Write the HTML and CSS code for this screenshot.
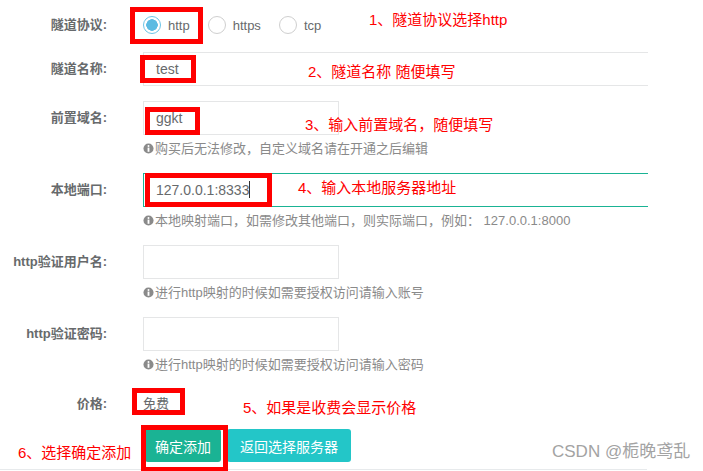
FILE: index.html
```html
<!DOCTYPE html>
<html lang="zh-CN">
<head>
    <meta charset="UTF-8">
    <meta name="viewport" content="width=device-width, initial-scale=1.0">
    <title>添加隧道</title>
    <link rel="stylesheet" href="styles.css">
</head>
<body>
    <div class="page">
        <form class="tunnel-form">
            <!-- 隧道协议 -->
            <div class="row row-radio">
                <label class="label">隧道协议:</label>
                <div class="field radios">
                    <span class="radio-item"><span class="radio checked"></span>http</span>
                    <span class="radio-item"><span class="radio"></span>https</span>
                    <span class="radio-item"><span class="radio"></span>tcp</span>
                </div>
            </div>
            <!-- 隧道名称 -->
            <div class="row">
                <label class="label">隧道名称:</label>
                <div class="field">
                    <div class="input wide">test</div>
                </div>
            </div>
            <!-- 前置域名 -->
            <div class="row">
                <label class="label">前置域名:</label>
                <div class="field">
                    <div class="input">ggkt</div>
                    <p class="help">
                        <svg class="info" viewBox="0 0 12 12"><circle cx="6" cy="6" r="5.5" fill="currentColor"/><circle cx="6" cy="3.3" r="1.1" fill="#fff"/><rect x="5" y="5" width="2" height="4.6" fill="#fff"/></svg>购买后无法修改，自定义域名请在开通之后编辑
                    </p>
                </div>
            </div>
            <!-- 本地端口 -->
            <div class="row">
                <label class="label">本地端口:</label>
                <div class="field">
                    <div class="input wide focus">127.0.0.1:8333<span class="caret"></span></div>
                    <p class="help">
                        <svg class="info" viewBox="0 0 12 12"><circle cx="6" cy="6" r="5.5" fill="currentColor"/><circle cx="6" cy="3.3" r="1.1" fill="#fff"/><rect x="5" y="5" width="2" height="4.6" fill="#fff"/></svg>本地映射端口，如需修改其他端口，则实际端口，例如： 127.0.0.1:8000
                    </p>
                </div>
            </div>
            <!-- http验证用户名 -->
            <div class="row">
                <label class="label">http验证用户名:</label>
                <div class="field">
                    <div class="input"></div>
                    <p class="help">
                        <svg class="info" viewBox="0 0 12 12"><circle cx="6" cy="6" r="5.5" fill="currentColor"/><circle cx="6" cy="3.3" r="1.1" fill="#fff"/><rect x="5" y="5" width="2" height="4.6" fill="#fff"/></svg>进行http映射的时候如需要授权访问请输入账号
                    </p>
                </div>
            </div>
            <!-- http验证密码 -->
            <div class="row">
                <label class="label">http验证密码:</label>
                <div class="field">
                    <div class="input"></div>
                    <p class="help">
                        <svg class="info" viewBox="0 0 12 12"><circle cx="6" cy="6" r="5.5" fill="currentColor"/><circle cx="6" cy="3.3" r="1.1" fill="#fff"/><rect x="5" y="5" width="2" height="4.6" fill="#fff"/></svg>进行http映射的时候如需要授权访问请输入密码
                    </p>
                </div>
            </div>
            <!-- 价格 -->
            <div class="row row-price">
                <label class="label">价格:</label>
                <div class="field price">免费</div>
            </div>
            <!-- 按钮 -->
            <div class="row row-btns">
                <div class="field buttons">
                    <button type="button" class="btn btn-primary">确定添加</button>
                    <button type="button" class="btn btn-info">返回选择服务器</button>
                </div>
            </div>
        </form>
        <div class="bottom-line"></div>

        <!-- 标注 -->
        <div class="mark" style="left:130px;top:7px;width:73px;height:37px"></div>
        <div class="mark" style="left:140px;top:55px;width:56px;height:28px"></div>
        <div class="mark" style="left:145px;top:107px;width:55px;height:28px"></div>
        <div class="mark" style="left:145px;top:173px;width:127px;height:34px"></div>
        <div class="mark" style="left:132px;top:388px;width:53px;height:27px"></div>
        <div class="mark" style="left:141px;top:425px;width:87px;height:47px"></div>

        <span class="note" style="left:369px;top:10px">1、隧道协议选择http</span>
        <span class="note" style="left:308px;top:62px">2、隧道名称 随便填写</span>
        <span class="note" style="left:305px;top:115px">3、输入前置域名，随便填写</span>
        <span class="note" style="left:298px;top:178px">4、输入本地服务器地址</span>
        <span class="note" style="left:243px;top:398px">5、如果是收费会显示价格</span>
        <span class="note" style="left:18px;top:443px">6、选择确定添加</span>

        <span class="watermark">CSDN @栀晚鸢乱</span>
    </div>
</body>
</html>
```

FILE: styles.css
```css
/* Page */
body{
    margin: 0;
    background-color: #fff;
    font-family: "Liberation Sans", "Noto Sans CJK SC", sans-serif;
    color: #676a6c;
}
.page{
    position: relative;
    width: 703px;
    height: 471px;
    overflow: hidden;
    padding-top: 8px;
    box-sizing: border-box;
}

/* Form rows */
.row{
    display: flex;
    align-items: flex-start;
    margin-bottom: 15px;
}
.row-radio{
    height: 34px;
    margin-bottom: 10px;
}
.label{
    width: 107px;
    flex-shrink: 0;
    text-align: right;
    font-size: 13px;
    font-weight: bold;
    line-height: 34px;
    color: #676a6c;
}
.field{
    margin-left: 36px;
}

/* Radios */
.radios{
    display: flex;
    align-items: center;
    height: 34px;
    gap: 18px;
    font-size: 13px;
}
.radio-item{
    display: flex;
    align-items: center;
    gap: 7px;
    color: #676a6c;
}
.radio{
    width: 18px;
    height: 18px;
    box-sizing: border-box;
    border: 1px solid #cfcfcf;
    border-radius: 50%;
    background-color: #fff;
}
.radio.checked{
    border: 1.5px solid #6cc4e6;
    background: radial-gradient(circle, #5bbbe2 0 5.5px, #fff 6px);
}

/* Inputs */
.input{
    width: 196px;
    height: 34px;
    box-sizing: border-box;
    border: 1px solid #e5e6e7;
    padding: 0 12px;
    font-size: 14px;
    line-height: 32px;
    color: #676a6c;
}
.input.wide{
    width: 505px;
    border-right: none;
}
.input.focus{
    border-color: #1ab394;
}
.caret{
    display: inline-block;
    width: 1px;
    height: 17px;
    background-color: #333;
    vertical-align: middle;
    margin-top: -3px;
}
.help{
    margin: 4px 0 0;
    font-size: 13px;
    line-height: 19px;
    color: #8a8a8a;
    white-space: nowrap;
}
.info{
    width: 11px;
    height: 11px;
    vertical-align: -1px;
    margin-right: 1px;
}

/* Price */
.row-price{
    margin-bottom: 10px;
}
.row-price .label{
    line-height: 30px;
}
.price{
    font-size: 13px;
    line-height: 30px;
    color: #676a6c;
}

/* Buttons */
.row-btns{
    margin-bottom: 0;
}
.buttons{
    margin-left: 145px;
    display: flex;
    gap: 6px;
}
.btn{
    height: 33px;
    border: none;
    border-radius: 3px;
    color: #fff;
    font-family: inherit;
    font-size: 14px;
    padding: 0 10px;
    cursor: pointer;
}
.btn-primary{
    background-color: #1ab394;
}
.btn-info{
    background-color: #23c6c8;
    padding: 0 13px;
}
.bottom-line{
    width: 647px;
    margin-top: 7px;
    border-top: 1px solid #e7eaec;
}

/* Annotations */
.mark{
    position: absolute;
    box-sizing: border-box;
    border: 5px solid #ff0000;
}
.note{
    position: absolute;
    font-size: 15px;
    line-height: 20px;
    color: #ff0000;
    white-space: nowrap;
}
.watermark{
    position: absolute;
    left: 552px;
    top: 441px;
    font-size: 17px;
    line-height: 22px;
    color: #a3a3a3;
    white-space: nowrap;
}
```
